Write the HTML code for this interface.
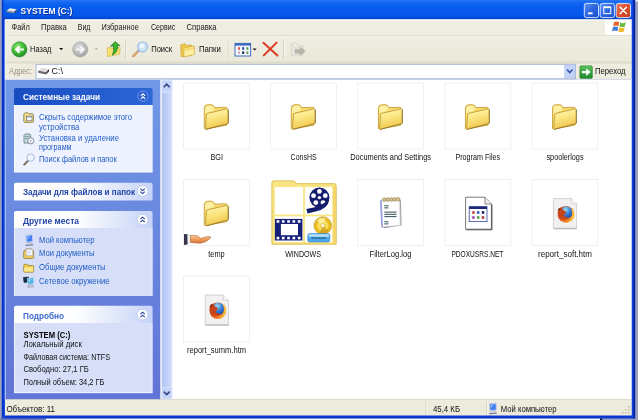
<!DOCTYPE html>
<html lang="ru"><head><meta charset="utf-8"><title>SYSTEM (C:)</title>
<style>html,body{margin:0;padding:0;background:#fff;overflow:hidden}svg{display:block;will-change:transform;transform:translateZ(0)}</style></head>
<body>
<svg width="638" height="420" viewBox="0 0 638 420" font-family="'Liberation Sans', sans-serif">

<defs>
<linearGradient id="gTitle" x1="0" y1="0" x2="0" y2="1">
 <stop offset="0" stop-color="#2a74f2"/><stop offset="0.12" stop-color="#1268f4"/><stop offset="0.35" stop-color="#075cef"/><stop offset="0.8" stop-color="#0656e8"/><stop offset="0.93" stop-color="#0548d2"/><stop offset="1" stop-color="#0440c2"/>
</linearGradient>
<linearGradient id="gSide" x1="0" y1="0" x2="0" y2="1">
 <stop offset="0" stop-color="#7099e6"/><stop offset="1" stop-color="#6174d7"/>
</linearGradient>
<linearGradient id="gHdrDark" x1="0" y1="0" x2="1" y2="0">
 <stop offset="0" stop-color="#184dc2"/><stop offset="1" stop-color="#2e67d6"/>
</linearGradient>
<linearGradient id="gHdrLight" x1="0" y1="0" x2="1" y2="0">
 <stop offset="0" stop-color="#ffffff"/><stop offset="0.45" stop-color="#fdfeff"/><stop offset="1" stop-color="#c6d3f7"/>
</linearGradient>
<linearGradient id="gTool" x1="0" y1="0" x2="0" y2="1">
 <stop offset="0" stop-color="#f3f2ea"/><stop offset="0.1" stop-color="#efeee2"/><stop offset="0.88" stop-color="#ebe9da"/><stop offset="1" stop-color="#d9d6c2"/>
</linearGradient>
<linearGradient id="gScroll" x1="0" y1="0" x2="1" y2="0">
 <stop offset="0" stop-color="#b2c3f3"/><stop offset="0.6" stop-color="#c3d1f9"/><stop offset="1" stop-color="#d2dcfb"/>
</linearGradient>
<radialGradient id="gBack" cx="0.4" cy="0.35" r="0.7">
 <stop offset="0" stop-color="#9aec7c"/><stop offset="0.55" stop-color="#3dbb32"/><stop offset="1" stop-color="#1c8424"/>
</radialGradient>
<radialGradient id="gFwd" cx="0.4" cy="0.35" r="0.7">
 <stop offset="0" stop-color="#dcdcdc"/><stop offset="0.7" stop-color="#b4b4b4"/><stop offset="1" stop-color="#9a9a9a"/>
</radialGradient>
<linearGradient id="gFolder" x1="0" y1="0" x2="0.3" y2="1">
 <stop offset="0" stop-color="#fffbbe"/><stop offset="0.45" stop-color="#fbe988"/><stop offset="1" stop-color="#f2c84e"/>
</linearGradient>
<linearGradient id="gGo" x1="0" y1="0" x2="0" y2="1">
 <stop offset="0" stop-color="#5cc25c"/><stop offset="1" stop-color="#1f8a2c"/>
</linearGradient>
<linearGradient id="gClose" x1="0" y1="0" x2="1" y2="1">
 <stop offset="0" stop-color="#e8845f"/><stop offset="0.5" stop-color="#d9502c"/><stop offset="1" stop-color="#c63a1c"/>
</linearGradient>
<linearGradient id="gBtn" x1="0" y1="0" x2="1" y2="1">
 <stop offset="0" stop-color="#6496f6"/><stop offset="0.45" stop-color="#2e68e2"/><stop offset="1" stop-color="#1d50c8"/>
</linearGradient>
<linearGradient id="gHand" x1="0" y1="0" x2="0" y2="1"><stop offset="0" stop-color="#fbd0a0"/><stop offset="0.5" stop-color="#ee9c58"/><stop offset="1" stop-color="#d87434"/></linearGradient>
<linearGradient id="gFox" x1="0" y1="0.3" x2="1" y2="0.6"><stop offset="0" stop-color="#c83a18"/><stop offset="0.45" stop-color="#e86a1c"/><stop offset="1" stop-color="#f6a428"/></linearGradient>
<radialGradient id="gGlobe" cx="0.42" cy="0.25" r="0.85"><stop offset="0" stop-color="#9cdcf8"/><stop offset="0.45" stop-color="#3c84d8"/><stop offset="1" stop-color="#1a3c9c"/></radialGradient>
<linearGradient id="gRB" x1="0" y1="0" x2="1" y2="0"><stop offset="0" stop-color="#1f58e2"/><stop offset="0.5" stop-color="#0830c4"/><stop offset="1" stop-color="#001c94"/></linearGradient>
<linearGradient id="gLB" x1="0" y1="0" x2="1" y2="0"><stop offset="0" stop-color="#0428bc"/><stop offset="0.6" stop-color="#0a3cd6"/><stop offset="1" stop-color="#1c54e4"/></linearGradient>
<g id="folder">
 <path d="M1.2,4 Q1.3,1 4.2,0.7 L8.6,0.6 Q10.6,0.8 11.6,3.5 L22.8,3.2 Q23.8,3.2 23.8,4.2 L23.8,21 L2.2,25 Q1.2,25 1.2,24 Z" fill="#f6da6c" stroke="#c8a23a" stroke-width="0.9"/>
 <path d="M2.1,4.2 Q2.3,1.9 4.4,1.7 L8.4,1.6 Q9.8,1.7 10.6,3.6 L10.6,6.4 L2.1,9.4 Z" fill="#fcf0a4"/>
 <path d="M3.5,10.3 Q3.5,9.5 4.4,9.3 L23.8,4.7 Q24.8,4.5 24.8,5.4 L24.8,18.6 Q24.8,19.4 23.8,19.6 L3.2,25 Q2.3,25.1 2.35,24.2 Z" fill="url(#gFolder)" stroke="#c39c36" stroke-width="0.9"/>
 <path d="M24.9,5.2 L25.7,5.8 L25.7,18.6 L24.6,20 L3.4,25.6 L3,25 L23.8,19.6 Q24.8,19.4 24.9,18.4 Z" fill="#86702a" opacity="0.9"/>
</g>
</defs>

<filter id="soft" filterUnits="userSpaceOnUse" x="-6" y="-6" width="650" height="432" color-interpolation-filters="sRGB"><feGaussianBlur stdDeviation="0.45"/></filter>
<g filter="url(#soft)">
<rect x="-6" y="-6" width="650" height="432" fill="#98a2c0" />
<rect x="46" y="418.3" width="555" height="8" fill="#ffffff" />
<rect x="-6" y="418.3" width="52" height="8" fill="#6f7cae" />
<rect x="600" y="418.3" width="2.2" height="8" fill="#10141c" />
<rect x="635.1" y="-6" width="9" height="7.5" fill="#f4f4f8" />
<rect x="1.9" y="0" width="633.2" height="418.5" fill="#0a36d2" />
<rect x="1.9" y="0" width="633.2" height="19.6" fill="url(#gTitle)" />
<rect x="1.9" y="0" width="1.6" height="19.6" fill="#0b3cd0" />
<rect x="631.6" y="0" width="3.5" height="418.5" fill="url(#gRB)" />
<rect x="1.9" y="19" width="2.9" height="399" fill="url(#gLB)" />
<rect x="5" y="19.4" width="626.5" height="395.9" fill="#efede1" />
<rect x="5" y="19.4" width="626.5" height="1.1" fill="#fbfbf8" />
<rect x="605" y="20" width="26.5" height="15.4" fill="#ffffff" />
<rect x="5" y="35.2" width="626.5" height="0.8" fill="#dddac8" />
<rect x="5" y="36" width="626.5" height="27.6" fill="url(#gTool)" />
<rect x="5" y="63.6" width="626.5" height="16" fill="#eeecdf" />
<rect x="5" y="79.5" width="155.5" height="320" fill="url(#gSide)" />
<rect x="160.5" y="79.5" width="12" height="320" fill="#f4f7fe" />
<rect x="161.8" y="79.5" width="10" height="320" fill="url(#gScroll)" />
<rect x="172.5" y="79.5" width="459" height="320" fill="#ffffff" />
<rect x="5" y="79" width="626.5" height="1" fill="#d5dcef" />
<rect x="4.7" y="79.5" width="1.2" height="320" fill="#a9c4f6" />
<rect x="4.7" y="19.6" width="1.0" height="59.9" fill="#fbfbf7" />
<rect x="5" y="399.5" width="626.5" height="15.8" fill="#edebdc" />
<rect x="5" y="399.5" width="626.5" height="0.9" fill="#c9c6b4" />
<rect x="5" y="400.4" width="626.5" height="0.8" fill="#f6f5ee" />
<g><path d="M6.5,10.5 L10,8.2 L16.8,9.2 L13.8,12 Z" fill="#e8e8ec"/><path d="M6.5,10.5 L13.8,12 L13.8,13.6 L6.5,12 Z" fill="#8a8a90"/><path d="M13.8,12 L16.8,9.2 L16.8,10.8 L13.8,13.6 Z" fill="#5a5a60"/></g>
<text x="21.2" y="14.5" font-size="9.4" font-weight="bold" fill="#0a2a8c" textLength="51.8" lengthAdjust="spacingAndGlyphs" >SYSTEM (C:)</text>
<text x="20.6" y="13.9" font-size="9.4" font-weight="bold" fill="#ffffff" textLength="51.8" lengthAdjust="spacingAndGlyphs" >SYSTEM (C:)</text>
<rect x="584.3" y="3.4" width="14.2" height="14.2" rx="2" fill="url(#gBtn)" stroke="#e6edfd" stroke-width="0.9"/>
<rect x="600.2" y="3.4" width="14.2" height="14.2" rx="2" fill="url(#gBtn)" stroke="#e6edfd" stroke-width="0.9"/>
<rect x="616.2" y="3.4" width="14.2" height="14.2" rx="2" fill="url(#gClose)" stroke="#e6edfd" stroke-width="0.9"/>
<rect x="588" y="12.4" width="4.6" height="1.8" fill="#ffffff" />
<rect x="603.8" y="7" width="7" height="6.6" fill="none" stroke="#ffffff" stroke-width="1"/><rect x="603.8" y="6.6" width="7" height="1.6" fill="#ffffff"/>
<path d="M620.2,7.2 L626.4,13.6 M626.4,7.2 L620.2,13.6" stroke="#ffffff" stroke-width="1.5" stroke-linecap="round"/>
<text x="11.6" y="29.75" font-size="8.6" fill="#1a1a1a" textLength="18.2" lengthAdjust="spacingAndGlyphs" >Файл</text>
<text x="41" y="29.75" font-size="8.6" fill="#1a1a1a" textLength="25.8" lengthAdjust="spacingAndGlyphs" >Правка</text>
<text x="77.8" y="29.75" font-size="8.6" fill="#1a1a1a" textLength="12.6" lengthAdjust="spacingAndGlyphs" >Вид</text>
<text x="101.5" y="29.75" font-size="8.6" fill="#1a1a1a" textLength="37.3" lengthAdjust="spacingAndGlyphs" >Избранное</text>
<text x="151" y="29.75" font-size="8.6" fill="#1a1a1a" textLength="24.2" lengthAdjust="spacingAndGlyphs" >Сервис</text>
<text x="186.5" y="29.75" font-size="8.6" fill="#1a1a1a" textLength="30.0" lengthAdjust="spacingAndGlyphs" >Справка</text>
<g transform="translate(612.8,20.6)"><path d="M1.2,1.6 Q3.6,0 6.4,1.6 L5.6,5.6 Q3,4.2 0.4,5.6 Z" fill="#e8632c"/><path d="M7.4,1.9 Q10,3.4 13,1.6 L12,5.8 Q9.4,7.2 6.6,5.9 Z" fill="#6cb83a"/><path d="M0.1,6.6 Q2.8,5.2 5.4,6.6 L4.6,10.6 Q2,9.2 -0.8,10.6 Z" fill="#3f7ad8"/><path d="M6.4,6.9 Q9,8.4 11.8,6.8 L11,10.9 Q8.2,12.4 5.6,10.9 Z" fill="#f2b824"/></g>
<circle cx="19.4" cy="49.4" r="7.6" fill="url(#gBack)" stroke="#2a7a2e" stroke-width="0.5"/>
<path d="M14.6,49.5 L18.9,45.6 L20.2,46.9 L18.6,48.4 L23.8,48.4 L23.8,50.6 L18.6,50.6 L20.2,52.1 L18.9,53.4 Z" fill="#ffffff"/>
<text x="30.1" y="52.05" font-size="8.6" fill="#111" textLength="21.3" lengthAdjust="spacingAndGlyphs" >Назад</text>
<path d="M59.2,47.9 L63.2,47.9 L61.2,50.3 Z" fill="#111"/>
<circle cx="80.2" cy="49.4" r="7.7" fill="url(#gFwd)" stroke="#a8a8a8" stroke-width="0.5"/>
<path d="M85.2,49.5 L80.9,45.6 L79.6,46.9 L81.2,48.4 L76,48.4 L76,50.6 L81.2,50.6 L79.6,52.1 L80.9,53.4 Z" fill="#f6f6f6"/>
<path d="M94.6,48 L98,48 L96.3,50 Z" fill="#b8b5a6"/>
<g><path d="M107,48 L110.6,47.2 L111.6,48.6 L120.2,47.2 L119.6,54.2 L107.6,56.6 Z" fill="#f6e070" stroke="#d4b040" stroke-width="0.6"/><path d="M110.6,46.2 L115,41.6 L119.8,45.6 L117.6,45.8 Q118,52 112.4,55.2 Q114.4,51 113.4,46 Z" fill="#3cb42c" stroke="#1c7420" stroke-width="0.7"/></g>
<rect x="125.19999999999999" y="38.5" width="0.8" height="21.5" fill="#d2cfbd" />
<rect x="126.0" y="38.5" width="0.8" height="21.5" fill="#f8f7f0" />
<rect x="228.6" y="38.5" width="0.8" height="21.5" fill="#d2cfbd" />
<rect x="229.4" y="38.5" width="0.8" height="21.5" fill="#f8f7f0" />
<rect x="283.20000000000005" y="38.5" width="0.8" height="21.5" fill="#d2cfbd" />
<rect x="284.0" y="38.5" width="0.8" height="21.5" fill="#f8f7f0" />
<g><path d="M133.2,56.2 L138.2,51.2" stroke="#dca070" stroke-width="2.6" stroke-linecap="round"/><path d="M137.4,52 L139.2,50.2" stroke="#a8b0c0" stroke-width="2"/><circle cx="142.6" cy="46.9" r="4.9" fill="#cfe6fa" stroke="#9cbbe4" stroke-width="1.2"/><circle cx="141.8" cy="45.8" r="2.4" fill="#eff8ff"/></g>
<text x="151.2" y="52.05" font-size="8.6" fill="#111" textLength="21.0" lengthAdjust="spacingAndGlyphs" >Поиск</text>
<g><path d="M180.6,45 L185,43.6 L186.4,45.4 L191.6,45 L191.6,55.6 L181.2,56.8 Z" fill="#f0c84c" stroke="#c89c30" stroke-width="0.6"/><path d="M183,48.2 L194.2,46 L194.6,53.8 L183.6,56.6 Z" fill="#fae47c" stroke="#d0a838" stroke-width="0.6"/><path d="M184.2,50.4 L194.4,48.4 L194.6,54.2 L184,56.8 Z" fill="#fdf0a4" stroke="#d4ae40" stroke-width="0.5"/></g>
<text x="198.9" y="52.05" font-size="8.6" fill="#111" textLength="22.0" lengthAdjust="spacingAndGlyphs" >Папки</text>
<g><rect x="235" y="43.4" width="15.6" height="12.6" fill="#f4f8ff" stroke="#3c6cc0" stroke-width="1"/><rect x="235" y="43.4" width="15.6" height="2.2" fill="#3c6cc0"/>
<rect x="238.0" y="47.2" width="2" height="2.6" fill="#e0584a"/>
<rect x="242.2" y="47.2" width="2" height="2.6" fill="#2a48b8"/>
<rect x="246.4" y="47.2" width="2" height="2.6" fill="#48a040"/>
<rect x="238.0" y="51.4" width="2" height="2.6" fill="#c8a8c0"/>
<rect x="242.2" y="51.4" width="2" height="2.6" fill="#16205a"/>
<rect x="246.4" y="51.4" width="2" height="2.6" fill="#6a9a58"/>
</g>
<path d="M252.6,48.4 L256.6,48.4 L254.6,50.6 Z" fill="#111"/>
<path d="M263.4,42.8 L277.4,55.6 M276.6,42.6 L263.8,55.4" stroke="#dc3a22" stroke-width="2" stroke-linecap="round"/>
<g><path d="M291,44.4 L295.6,42.6 L298,44.6 L303.4,46 L303.4,54.6 L291.4,55.6 Z" fill="#e6e5de" stroke="#cdcbc0" stroke-width="0.6"/><path d="M293.4,45 L296,43.8 L297,46 Z" fill="#f8f8f4"/><path d="M295,49.4 L300,49.4 L300,47 L305.4,51.2 L300,55.4 L300,53.2 L295,53.2 Z" fill="#b8b7ad" stroke="#a8a79d" stroke-width="0.4"/></g>
<text x="9" y="74.15" font-size="8.6" fill="#949282" textLength="23" lengthAdjust="spacingAndGlyphs" >Адрес:</text>
<rect x="36" y="64.3" width="539.5" height="14.5" fill="#ffffff" stroke="#9fb0d0" stroke-width="0.9"/>
<g><path d="M38.2,70.6 L42,68 L49,69 L46,72.2 Z" fill="#dcdce0"/><path d="M38.2,70.6 L46,72.2 L46,74.6 L38.2,72.8 Z" fill="#6c6868"/><path d="M46,72.2 L49,69 L49,71.4 L46,74.6 Z" fill="#444048"/></g>
<text x="51.6" y="74.15" font-size="8.6" fill="#111" textLength="11.4" lengthAdjust="spacingAndGlyphs" >C:\</text>
<rect x="564.6" y="65" width="10.4" height="13" fill="#c4d4f8" stroke="#b0c4f0" stroke-width="0.5"/>
<path d="M567,69.6 L569.8,72.6 L572.6,69.6" fill="none" stroke="#3050a8" stroke-width="1.5"/>
<rect x="579.8" y="65.8" width="12.6" height="12.6" rx="1.2" fill="url(#gGo)" stroke="#2a7a30" stroke-width="0.5"/>
<path d="M582,71 L586.2,71 L586.2,68.2 L590.6,72.1 L586.2,76 L586.2,73.2 L582,73.2 Z" fill="#ffffff"/>
<text x="595" y="74.05" font-size="8.6" fill="#111" textLength="30.6" lengthAdjust="spacingAndGlyphs" >Переход</text>
<path d="M14,105 L14,90 Q14,88 16,88 L150.6,88 Q152.6,88 152.6,90 L152.6,105 Z" fill="url(#gHdrDark)"/>
<text x="23" y="100.15" font-size="8.6" font-weight="bold" fill="#ffffff" textLength="77" lengthAdjust="spacingAndGlyphs" >Системные задачи</text>
<circle cx="143" cy="96.2" r="5.1" fill="#2a5ccc" stroke="#6a98f0" stroke-width="1"/>
<path d="M140.8,95.8 L143,93.8 L145.2,95.8" fill="none" stroke="#ffffff" stroke-width="1.1"/>
<path d="M140.8,98.8 L143,96.8 L145.2,98.8" fill="none" stroke="#ffffff" stroke-width="1.1"/>
<rect x="14" y="105" width="138.6" height="67.5" fill="#ffffff" />
<rect x="14.8" y="105" width="137.0" height="66.7" fill="#eef2fe" />
<g><path d="M23.8,114.6 Q23.8,113 25.4,112.9 L28,112.8 L29,113.8 L32,113.8 Q33.4,113.9 33.4,115.2 L33.4,121.2 Q33.4,122.4 32.2,122.4 L25,122.4 Q23.8,122.4 23.8,121.2 Z" fill="#efe08a" stroke="#7c7440" stroke-width="0.8"/><rect x="26.6" y="116.2" width="5.4" height="4.6" fill="#fafafa" stroke="#5a5a66" stroke-width="0.6"/><rect x="26.6" y="116.2" width="5.4" height="1.2" fill="#8a94b8"/></g>
<text x="39" y="119.95" font-size="8.6" fill="#215dc6" textLength="93" lengthAdjust="spacingAndGlyphs" >Скрыть содержимое этого</text>
<text x="39" y="129.75" font-size="8.6" fill="#215dc6" textLength="40.4" lengthAdjust="spacingAndGlyphs" >устройства</text>
<g><path d="M24,135.4 L25.2,134 L30,134 L30.6,135.4 L30.6,143 L24,143 Z" fill="#c8dcd8" stroke="#4a6c74" stroke-width="0.7"/><path d="M25,136.4 L29.6,136.4 M25,138.4 L28,138.4" stroke="#5c8890" stroke-width="0.7"/><circle cx="30.8" cy="140.8" r="3.1" fill="#f2f4f8" stroke="#5a6478" stroke-width="0.7"/><circle cx="30.8" cy="140.8" r="0.9" fill="#9aa4b8"/></g>
<text x="39" y="140.95" font-size="8.6" fill="#215dc6" textLength="80" lengthAdjust="spacingAndGlyphs" >Установка и удаление</text>
<text x="39" y="150.15" font-size="8.6" fill="#215dc6" textLength="32.6" lengthAdjust="spacingAndGlyphs" >программ</text>
<g><path d="M24.2,164.6 L28.4,160.4" stroke="#7a6a5c" stroke-width="2" stroke-linecap="round"/><circle cx="30.6" cy="157.6" r="3.7" fill="#eef6fd" stroke="#9cb0d0" stroke-width="0.9"/></g>
<text x="39" y="161.55" font-size="8.6" fill="#215dc6" textLength="77.8" lengthAdjust="spacingAndGlyphs" >Поиск файлов и папок</text>
<path d="M14,200.5 L14,184.7 Q14,182.7 16,182.7 L150.6,182.7 Q152.6,182.7 152.6,184.7 L152.6,200.5 Z" fill="url(#gHdrLight)"/>
<text x="23" y="194.75" font-size="8.6" font-weight="bold" fill="#2244a8" textLength="112" lengthAdjust="spacingAndGlyphs" >Задачи для файлов и папок</text>
<circle cx="142.6" cy="191" r="5.4" fill="#ffffff" stroke="#b4c4ec" stroke-width="0.8"/>
<path d="M140.4,188.6 L142.6,190.6 L144.79999999999998,188.6" fill="none" stroke="#1e3c96" stroke-width="1.1"/>
<path d="M140.4,191.6 L142.6,193.6 L144.79999999999998,191.6" fill="none" stroke="#1e3c96" stroke-width="1.1"/>
<path d="M14,228 L14,213 Q14,211 16,211 L150.6,211 Q152.6,211 152.6,213 L152.6,228 Z" fill="url(#gHdrLight)"/>
<text x="23" y="223.75" font-size="8.6" font-weight="bold" fill="#2244a8" textLength="56" lengthAdjust="spacingAndGlyphs" >Другие места</text>
<circle cx="142.6" cy="219.6" r="5.4" fill="#ffffff" stroke="#b4c4ec" stroke-width="0.8"/>
<path d="M140.4,219.2 L142.6,217.2 L144.79999999999998,219.2" fill="none" stroke="#1e3c96" stroke-width="1.1"/>
<path d="M140.4,222.2 L142.6,220.2 L144.79999999999998,222.2" fill="none" stroke="#1e3c96" stroke-width="1.1"/>
<rect x="14" y="228" width="138.6" height="67.8" fill="#f6f8ff" />
<rect x="14.8" y="228" width="137.0" height="67" fill="#d6dff7" />
<text x="39" y="242.55" font-size="8.6" fill="#215dc6" textLength="55.6" lengthAdjust="spacingAndGlyphs" >Мой компьютер</text>
<text x="39" y="256.15" font-size="8.6" fill="#215dc6" textLength="55.6" lengthAdjust="spacingAndGlyphs" >Мои документы</text>
<text x="39" y="270.15" font-size="8.6" fill="#215dc6" textLength="66.6" lengthAdjust="spacingAndGlyphs" >Общие документы</text>
<text x="39" y="283.95" font-size="8.6" fill="#215dc6" textLength="70.6" lengthAdjust="spacingAndGlyphs" >Сетевое окружение</text>
<g><path d="M25.8,235.4 L32.4,234.8 L32.8,241.6 L26.4,242.2 Z" fill="#3f7ff0" stroke="#c4d0ec" stroke-width="1"/><path d="M27,236.4 L30,236.2 L27.4,240 Z" fill="#8cb8fa"/><path d="M27.6,242.6 L31.6,242.4 L32.8,245 L26.2,245.4 Z" fill="#d4d8e6" stroke="#8a90a8" stroke-width="0.4"/><path d="M25.4,245.4 L33,244.8" stroke="#5a6284" stroke-width="0.8"/></g>
<g><path d="M23.6,252 Q23.6,250.6 25,250.4 L26,250.2 L26,249 L31.4,249 L33,250.6 L33.6,250.8 L33.6,257.4 Q33.6,258.4 32.6,258.4 L24.6,258.4 Q23.6,258.4 23.6,257.4 Z" fill="#ecca5c" stroke="#8a7430" stroke-width="0.7"/><path d="M26.2,249.2 L31.2,249.2 L32.6,250.8 L32.6,255.4 L26.2,255.4 Z" fill="#fbfdff" stroke="#8c98b8" stroke-width="0.4"/><path d="M27.2,251.4 L31,251.4 M27.2,253 L31,253" stroke="#a8c0e8" stroke-width="0.6"/></g>
<g><path d="M23.7,265.4 Q23.7,264.4 24.8,264.3 L27.4,264.2 L28.4,265.6 L32.8,265.6 Q33.7,265.6 33.7,266.6 L33.7,271.2 Q33.7,272.2 32.8,272.2 L24.6,272.2 Q23.7,272.2 23.7,271.2 Z" fill="#f0cc50" stroke="#94782c" stroke-width="0.7"/><path d="M24.2,267.6 L33.2,267.2 L33.2,271.4 L24.2,271.6 Z" fill="#fbe88c"/></g>
<g><path d="M23.4,277.4 L28.6,277 L29,282 L24,282.6 Z" fill="#14344c" stroke="#0c1c2c" stroke-width="0.5"/><path d="M27.4,278.4 L33.6,277.6 L33.8,283.6 L28,284.4 Z" fill="#4cb4ec" stroke="#c8d8f0" stroke-width="0.8"/><path d="M28.6,279.4 L31.4,279 L29,282.6 Z" fill="#a0dcfa"/><path d="M28.4,285 L32.6,284.6 L33.6,286.8 L27.6,287.4 Z" fill="#d0d0e0" stroke="#6c6c90" stroke-width="0.4"/></g>
<path d="M14,323.0 L14,307.8 Q14,305.8 16,305.8 L150.6,305.8 Q152.6,305.8 152.6,307.8 L152.6,323.0 Z" fill="url(#gHdrLight)"/>
<text x="23" y="318.75" font-size="8.6" font-weight="bold" fill="#3c6cd0" textLength="41" lengthAdjust="spacingAndGlyphs" >Подробно</text>
<circle cx="142.6" cy="314.6" r="5.4" fill="#ffffff" stroke="#b4c4ec" stroke-width="0.8"/>
<path d="M140.4,314.20000000000005 L142.6,312.20000000000005 L144.79999999999998,314.20000000000005" fill="none" stroke="#1e3c96" stroke-width="1.1"/>
<path d="M140.4,317.20000000000005 L142.6,315.20000000000005 L144.79999999999998,317.20000000000005" fill="none" stroke="#1e3c96" stroke-width="1.1"/>
<rect x="14" y="323" width="138.6" height="70.2" fill="#f6f8ff" />
<rect x="14.8" y="323" width="137.0" height="69.4" fill="#d6dff7" />
<text x="23.6" y="337.95" font-size="8.6" font-weight="bold" fill="#000" textLength="46.8" lengthAdjust="spacingAndGlyphs" >SYSTEM (C:)</text>
<text x="23.4" y="347.35" font-size="8.6" fill="#111" textLength="58.4" lengthAdjust="spacingAndGlyphs" >Локальный диск</text>
<text x="23.4" y="360.15" font-size="8.6" fill="#111" textLength="86.8" lengthAdjust="spacingAndGlyphs" >Файловая система: NTFS</text>
<text x="23.4" y="372.35" font-size="8.6" fill="#111" textLength="65.4" lengthAdjust="spacingAndGlyphs" >Свободно: 27,1 ГБ</text>
<text x="23.4" y="384.95" font-size="8.6" fill="#111" textLength="81.0" lengthAdjust="spacingAndGlyphs" >Полный объем: 34,2 ГБ</text>
<rect x="161.6" y="80.4" width="10.4" height="11.8" rx="1" fill="#c4d3fa" stroke="#e4ebfd" stroke-width="0.7"/>
<path d="M163.8,87.2 L166.7,84.2 L169.6,87.2" fill="none" stroke="#34437e" stroke-width="1.6"/>
<rect x="161.6" y="387.2" width="10.4" height="11.8" rx="1" fill="#c4d3fa" stroke="#e4ebfd" stroke-width="0.7"/>
<path d="M163.8,391.6 L166.7,394.6 L169.6,391.6" fill="none" stroke="#34437e" stroke-width="1.6"/>
<rect x="183.6" y="83.1" width="66" height="66" fill="#ffffff" stroke="#efeeeb" stroke-width="0.9"/>
<use href="#folder" x="203.1" y="104.1"/>
<rect x="270.6" y="83.1" width="66" height="66" fill="#ffffff" stroke="#efeeeb" stroke-width="0.9"/>
<use href="#folder" x="290.1" y="104.1"/>
<rect x="357.7" y="83.1" width="66" height="66" fill="#ffffff" stroke="#efeeeb" stroke-width="0.9"/>
<use href="#folder" x="377.2" y="104.1"/>
<rect x="444.8" y="83.1" width="66" height="66" fill="#ffffff" stroke="#efeeeb" stroke-width="0.9"/>
<use href="#folder" x="464.2" y="104.1"/>
<rect x="531.8" y="83.1" width="66" height="66" fill="#ffffff" stroke="#efeeeb" stroke-width="0.9"/>
<use href="#folder" x="551.3" y="104.1"/>
<text x="210.5" y="160.25" font-size="8.6" fill="#111" textLength="12.5" lengthAdjust="spacingAndGlyphs" >BGI</text>
<text x="290.6" y="160.25" font-size="8.6" fill="#111" textLength="26.0" lengthAdjust="spacingAndGlyphs" >ConsHS</text>
<text x="350.2" y="160.25" font-size="8.6" fill="#111" textLength="80.8" lengthAdjust="spacingAndGlyphs" >Documents and Settings</text>
<text x="455.4" y="160.25" font-size="8.6" fill="#111" textLength="44.7" lengthAdjust="spacingAndGlyphs" >Program Files</text>
<text x="546.5" y="160.25" font-size="8.6" fill="#111" textLength="37.0" lengthAdjust="spacingAndGlyphs" >spoolerlogs</text>
<rect x="183.6" y="179.6" width="66" height="66" fill="#ffffff" stroke="#efeeeb" stroke-width="0.9"/>
<use href="#folder" x="203.1" y="200.6"/>
<g transform="translate(0,0.3)"><path d="M184,233.6 L187.6,234 L187.8,244 L184,244.6 Z" fill="#34344c"/><path d="M187.6,234.4 L190.6,234.8 L190.6,242.2 L187.7,242.6 Z" fill="#f4f2ec" stroke="#b0a898" stroke-width="0.3"/><path d="M190.6,235 L196,235.2 Q199,236 200.6,238 L208,236.2 Q211.2,236 210.6,237.8 Q207,241.8 200,243 L190.6,242.2 Z" fill="url(#gHand)" stroke="#9c5428" stroke-width="0.5"/></g>
<g transform="translate(271,180)"><path d="M0.9,3 Q0.9,0.9 3,0.9 L22,0.9 Q24.2,1 25.4,3.7 L63.2,3.7 Q65.2,3.7 65.2,5.8 L65.2,64.2 L0.9,64.2 Z" fill="#f9e584" stroke="#d9b748" stroke-width="0.9"/><rect x="61.6" y="6" width="3.2" height="57.8" fill="#f6d468"/><rect x="3.9" y="7.1" width="28.2" height="27.5" fill="#ffffff"/><rect x="33.9" y="7.1" width="27.5" height="27.5" fill="#ffffff"/><rect x="3.9" y="36.3" width="28.2" height="25.8" fill="#ffffff"/><rect x="33.9" y="36.3" width="27.5" height="25.8" fill="#ffffff"/><circle cx="48.4" cy="17.6" r="10" fill="#141c6c"/><circle cx="48.4" cy="17.6" r="1.7" fill="#fff"/><circle cx="48.4" cy="11.4" r="2.4" fill="#fff"/><circle cx="54.3" cy="15.7" r="2.4" fill="#fff"/><circle cx="52" cy="22.6" r="2.4" fill="#fff"/><circle cx="44.8" cy="22.6" r="2.4" fill="#fff"/><circle cx="42.5" cy="15.7" r="2.4" fill="#fff"/><path d="M58.2,20 Q57,29 44.4,31.6 L36.6,33.4 L35.4,29 L42.6,27.4 Q49.4,26 51.4,24 Z" fill="#141c6c"/><rect x="3.9" y="38.9" width="27.5" height="21.6" fill="#16207a"/><rect x="9.9" y="44" width="17.1" height="11.2" fill="#ffffff"/>
<rect x="5.6" y="40.2" width="2.7" height="2.5" fill="#fff"/><rect x="5.6" y="56.8" width="2.7" height="2.5" fill="#fff"/>
<rect x="10.9" y="40.2" width="2.7" height="2.5" fill="#fff"/><rect x="10.9" y="56.8" width="2.7" height="2.5" fill="#fff"/>
<rect x="16.2" y="40.2" width="2.7" height="2.5" fill="#fff"/><rect x="16.2" y="56.8" width="2.7" height="2.5" fill="#fff"/>
<rect x="21.5" y="40.2" width="2.7" height="2.5" fill="#fff"/><rect x="21.5" y="56.8" width="2.7" height="2.5" fill="#fff"/>
<rect x="26.8" y="40.2" width="2.7" height="2.5" fill="#fff"/><rect x="26.8" y="56.8" width="2.7" height="2.5" fill="#fff"/>
<circle cx="51.8" cy="45.6" r="8.8" fill="#e8bc22" stroke="#b88c16" stroke-width="0.6"/><circle cx="51.8" cy="45.6" r="5.6" fill="#f8de5c"/><path d="M51.8,45.6 L46,40.4 A7.8,7.8 0 0 1 54.6,38.4 Z" fill="#fdf2a8" opacity="0.85"/><path d="M51.8,45.6 L57.4,51 A7.8,7.8 0 0 1 48.8,52.8 Z" fill="#c8981a" opacity="0.7"/><circle cx="51.8" cy="45.6" r="2" fill="#fffbe4" stroke="#c4961a" stroke-width="0.5"/><rect x="36.8" y="53.6" width="22" height="8.4" rx="1.8" fill="#4ea8ee" stroke="#2a7ccc" stroke-width="0.6"/><rect x="37.6" y="54.2" width="20.4" height="2.6" rx="1" fill="#b8e0fb"/><rect x="40.4" y="57.4" width="14.6" height="1.3" fill="#1f6c8c"/></g>
<rect x="357.7" y="179.6" width="66" height="66" fill="#ffffff" stroke="#efeeeb" stroke-width="0.9"/>
<rect x="444.8" y="179.6" width="66" height="66" fill="#ffffff" stroke="#efeeeb" stroke-width="0.9"/>
<g transform="translate(357.7,179.6)"><path d="M23.6,20.4 L42,19.8 L42.6,45.8 L24.8,47.4 Z" fill="#fdfdfe" stroke="#b4b4c4" stroke-width="0.7"/><path d="M22.2,20.8 L23.9,20.4 L25.1,47.4 L23.5,47.9 Z" fill="#98a2e2"/><path d="M42.2,20 L43.3,21 L43.9,45.4 L42.7,46.1 Z" fill="#a4a4aa"/><path d="M25,47.6 L42.8,46 L43.9,45.6 L26.4,48.6 Z" fill="#96969c"/>
<circle cx="26.6" cy="20.1" r="1.8" fill="#dcc494" stroke="#8e784a" stroke-width="0.6"/>
<circle cx="30.05" cy="20.0" r="1.8" fill="#dcc494" stroke="#8e784a" stroke-width="0.6"/>
<circle cx="33.5" cy="19.900000000000002" r="1.8" fill="#dcc494" stroke="#8e784a" stroke-width="0.6"/>
<circle cx="36.95" cy="19.8" r="1.8" fill="#dcc494" stroke="#8e784a" stroke-width="0.6"/>
<circle cx="40.400000000000006" cy="19.700000000000003" r="1.8" fill="#dcc494" stroke="#8e784a" stroke-width="0.6"/>
<rect x="26.6" y="25.6" width="4.2" height="1.1" fill="#46606a"/>
<rect x="26.6" y="27.7" width="4.2" height="1.1" fill="#46606a"/>
<rect x="26.6" y="32" width="12.2" height="1.1" fill="#46606a"/>
<rect x="26.6" y="34.2" width="12.2" height="1.1" fill="#46606a"/>
<rect x="26.6" y="36.4" width="12.2" height="1.1" fill="#46606a"/>
<rect x="26.6" y="41.6" width="4.2" height="1.1" fill="#46606a"/>
<rect x="26.6" y="43.7" width="4.2" height="1.1" fill="#46606a"/>
</g>
<g transform="translate(444.8,179.6)"><path d="M20.8,17.6 L40.2,17.6 L46.6,24.4 L46.6,49.6 L20.8,49.6 Z" fill="#ffffff" stroke="#6a6a6a" stroke-width="0.9"/><path d="M40.2,17.6 L40.2,24.4 L46.6,24.4" fill="#f0f0f0" stroke="#6a6a6a" stroke-width="0.8"/><path d="M47.2,25 L47.2,50.2 L21.6,50.2" fill="none" stroke="#3a3a3a" stroke-width="0.8"/><rect x="24.4" y="27" width="17.8" height="15" fill="#fbfbff" stroke="#3a4a9a" stroke-width="0.8"/><rect x="24.4" y="27" width="17.8" height="2.4" fill="#1c2878"/>
<rect x="27.4" y="31.6" width="2.4" height="2.6" fill="#c83c3c"/>
<rect x="32.199999999999996" y="31.6" width="2.4" height="2.6" fill="#2c54c8"/>
<rect x="37.0" y="31.6" width="2.4" height="2.6" fill="#1c2060"/>
<rect x="27.4" y="36.6" width="2.4" height="2.6" fill="#a040a8"/>
<rect x="32.199999999999996" y="36.6" width="2.4" height="2.6" fill="#4ca03c"/>
<rect x="37.0" y="36.6" width="2.4" height="2.6" fill="#9c3c2c"/>
</g>
<text x="208.3" y="256.75" font-size="8.6" fill="#111" textLength="16.4" lengthAdjust="spacingAndGlyphs" >temp</text>
<text x="285.2" y="256.75" font-size="8.6" fill="#111" textLength="35.8" lengthAdjust="spacingAndGlyphs" >WINDOWS</text>
<text x="369.5" y="256.75" font-size="8.6" fill="#111" textLength="42.0" lengthAdjust="spacingAndGlyphs" >FilterLog.log</text>
<text x="451.4" y="256.75" font-size="8.6" fill="#111" textLength="52.0" lengthAdjust="spacingAndGlyphs" >PDOXUSRS.NET</text>
<text x="538.0" y="256.75" font-size="8.6" fill="#111" textLength="54.0" lengthAdjust="spacingAndGlyphs" >report_soft.htm</text>
<rect x="531.8" y="179.6" width="66" height="66" fill="#ffffff" stroke="#efeeeb" stroke-width="0.9"/>
<g transform="translate(531.8,179.6)"><path d="M21.6,19 L39.6,19 L44.8,24.2 L44.8,48.6 L21.6,48.6 Z" fill="#f1f1f1" stroke="#c8c8c8" stroke-width="0.8"/><path d="M39.6,19 L39.6,24.2 L44.8,24.2" fill="#fafafa" stroke="#c4b8b8" stroke-width="0.6"/><path d="M22,49.2 L45.2,49.2" stroke="#9a9a9a" stroke-width="0.7"/><circle cx="34.2" cy="34.8" r="8.3" fill="url(#gFox)"/><circle cx="34.5" cy="33" r="6.2" fill="url(#gGlobe)"/><path d="M26.2,30.2 Q28,27.4 30.8,27.6 Q30,29.6 31.6,31 Q34.4,31.4 34.2,33.6 Q32,34.2 32,36 Q34,38.4 37.4,37.8 Q35.4,40.6 31.6,40.2 Q27.2,39 26.2,34.6 Q25.8,32 26.2,30.2 Z" fill="#c8441a"/><path d="M26,30.6 Q27,28.6 28.8,27.8 L28.2,30.4 Z" fill="#6e2812"/><path d="M40.6,28.4 Q43.6,32.6 42,37.6 Q39.8,42.2 34.4,43 Q39.4,40.8 40.2,36 Q40.8,32 39.8,29.4 Z" fill="#f8b83a"/></g>
<rect x="183.6" y="276.0" width="66" height="66" fill="#ffffff" stroke="#efeeeb" stroke-width="0.9"/>
<g transform="translate(183.6,276.0)"><path d="M21.6,19 L39.6,19 L44.8,24.2 L44.8,48.6 L21.6,48.6 Z" fill="#f1f1f1" stroke="#c8c8c8" stroke-width="0.8"/><path d="M39.6,19 L39.6,24.2 L44.8,24.2" fill="#fafafa" stroke="#c4b8b8" stroke-width="0.6"/><path d="M22,49.2 L45.2,49.2" stroke="#9a9a9a" stroke-width="0.7"/><circle cx="34.2" cy="34.8" r="8.3" fill="url(#gFox)"/><circle cx="34.5" cy="33" r="6.2" fill="url(#gGlobe)"/><path d="M26.2,30.2 Q28,27.4 30.8,27.6 Q30,29.6 31.6,31 Q34.4,31.4 34.2,33.6 Q32,34.2 32,36 Q34,38.4 37.4,37.8 Q35.4,40.6 31.6,40.2 Q27.2,39 26.2,34.6 Q25.8,32 26.2,30.2 Z" fill="#c8441a"/><path d="M26,30.6 Q27,28.6 28.8,27.8 L28.2,30.4 Z" fill="#6e2812"/><path d="M40.6,28.4 Q43.6,32.6 42,37.6 Q39.8,42.2 34.4,43 Q39.4,40.8 40.2,36 Q40.8,32 39.8,29.4 Z" fill="#f8b83a"/></g>
<text x="187.0" y="353.15" font-size="8.6" fill="#111" textLength="59.0" lengthAdjust="spacingAndGlyphs" >report_summ.htm</text>
<text x="6.4" y="411.75" font-size="8.6" fill="#111" textLength="48.6" lengthAdjust="spacingAndGlyphs" >Объектов: 11</text>
<rect x="425.6" y="402" width="0.8" height="12.6" fill="#c9c6b4" />
<rect x="426.40000000000003" y="402" width="0.8" height="12.6" fill="#fbfaf4" />
<rect x="486" y="402" width="0.8" height="12.6" fill="#c9c6b4" />
<rect x="486.8" y="402" width="0.8" height="12.6" fill="#fbfaf4" />
<text x="433" y="411.75" font-size="8.6" fill="#111" textLength="27" lengthAdjust="spacingAndGlyphs" >45,4 КБ</text>
<g transform="translate(-2.4,0.4)"><path d="M491.8,403.4 L498.4,402.8 L498.8,409.6 L492.4,410.2 Z" fill="#3f7ff0" stroke="#c4d0ec" stroke-width="1"/><path d="M493,404.4 L496,404.2 L493.4,408 Z" fill="#8cb8fa"/><path d="M493.6,410.6 L497.6,410.4 L498.8,413 L492.2,413.4 Z" fill="#d4d8e6" stroke="#8a90a8" stroke-width="0.4"/><path d="M491.4,413.4 L499,412.8" stroke="#5a6284" stroke-width="0.8"/></g>
<text x="500.8" y="411.75" font-size="8.6" fill="#111" textLength="55.8" lengthAdjust="spacingAndGlyphs" >Мой компьютер</text>
<rect x="628" y="412" width="1.4" height="1.4" fill="#b8b4a0" />
<rect x="625" y="412" width="1.4" height="1.4" fill="#b8b4a0" />
<rect x="628" y="409" width="1.4" height="1.4" fill="#b8b4a0" />
<rect x="622" y="412" width="1.4" height="1.4" fill="#b8b4a0" />
<rect x="625" y="409" width="1.4" height="1.4" fill="#b8b4a0" />
<rect x="628" y="406" width="1.4" height="1.4" fill="#b8b4a0" />
</g>
</svg>
</body></html>
